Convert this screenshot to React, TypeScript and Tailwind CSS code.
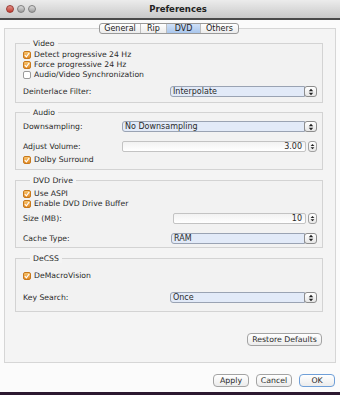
import type { ReactNode } from "react";

const FONT = "font-['DejaVu_Sans',sans-serif]";

function Arrows({ size = 7 }: { size?: number }) {
  return (
    <svg width={size} height={size + 2} viewBox="0 0 8 10">
      <path d="M4 0.8 L7 4 L1 4 Z" fill="#222" />
      <path d="M4 9.2 L7 6 L1 6 Z" fill="#222" />
    </svg>
  );
}

function Check({ checked, label }: { checked?: boolean; label: string }) {
  return (
    <div className="h-[10px] flex items-center gap-[3px]">
      {checked ? (
        <span className="w-[8px] h-[8px] rounded-[2px] border border-[#c7781c] bg-gradient-to-b from-[#f7c46c] to-[#e38b22] flex items-center justify-center">
          <svg width="6" height="6" viewBox="0 0 6 6">
            <path d="M0.8 3.2 L2.4 4.8 L5.2 1" stroke="#fff" strokeWidth="1.2" fill="none" />
          </svg>
        </span>
      ) : (
        <span className="w-[8px] h-[8px] rounded-[2px] border border-[#9a9a9a] bg-white" />
      )}
      <span className="text-[7.7px] leading-[10px] text-[#2a2a2a]">{label}</span>
    </div>
  );
}

function Select({ value }: { value: string }) {
  return (
    <div className="flex-1 h-[11px] flex">
      <div className="flex-1 rounded-l-[3px] border border-[#9aa3b3] bg-[#e2eaf8] text-[8px] leading-[9px] pl-[2px] text-[#2a2a2a]">
        {value}
      </div>
      <div className="w-[13px] rounded-[3px] border border-[#8d8d8d] bg-gradient-to-b from-white to-[#e6e6e6] flex items-center justify-center -ml-[1px]">
        <Arrows size={6} />
      </div>
    </div>
  );
}

function NumberField({ value }: { value: string }) {
  return (
    <div className="flex-1 h-[11px] flex gap-[2px]">
      <div className="flex-1 rounded-[2px] border border-[#c3c3c3] bg-gradient-to-b from-[#f2f2f2] to-white text-[8px] leading-[9px] text-right pr-[3px] text-[#2a2a2a]">
        {value}
      </div>
      <div className="w-[9px] rounded-[3px] border border-[#a0a0a0] bg-gradient-to-b from-white to-[#e8e8e8] flex items-center justify-center">
        <Arrows size={5} />
      </div>
    </div>
  );
}

function Row({ label, labelW, children, className = "" }: { label: string; labelW: string; children: ReactNode; className?: string }) {
  return (
    <div className={`flex items-center ${className}`}>
      <span className={`${labelW} text-[7.7px] text-[#2a2a2a] shrink-0`}>{label}</span>
      {children}
    </div>
  );
}

function Group({ title, h, className = "", children }: { title: string; h: string; className?: string; children: ReactNode }) {
  return (
    <div className={`relative ${h} border border-[#d3d3d3] bg-[#f2f2f2] pl-[7px] pr-[5px] ${className}`}>
      <span className="absolute -top-[5px] left-[14px] px-[3px] bg-[#f4f4f4] text-[7.7px] leading-[9px] text-[#2a2a2a]">
        {title}
      </span>
      {children}
    </div>
  );
}

function Button({ label, w, primary }: { label: string; w: string; primary?: boolean }) {
  return (
    <div
      className={`${w} h-[13px] rounded-[4px] border ${
        primary ? "border-[#6f9fd8]" : "border-[#a3a3a3]"
      } bg-gradient-to-b from-white to-[#ececec] text-[7.8px] leading-[11px] text-center text-[#2a2a2a]`}
    >
      {label}
    </div>
  );
}

export default function App() {
  return (
    <div className={`w-[340px] h-[395px] bg-[#2c1830] ${FONT}`}>
      <div className="h-[392px] bg-[#fbfbfb] flex flex-col">
        {/* title bar */}
        <div className="relative h-[20px] shrink-0 bg-gradient-to-b from-[#ececec] to-[#c9c9c9] border-b-[2px] border-[#4a4a4a] flex items-center justify-center">
          <div className="absolute left-[6px] top-[5px] flex gap-[3px]">
            <span className="w-[8px] h-[8px] rounded-full bg-gradient-to-b from-[#e0908a] to-[#c2382e] border border-[#9a3a32]" />
            <span className="w-[8px] h-[8px] rounded-full bg-gradient-to-b from-[#dcdcdc] to-[#9d9d9d] border border-[#808080]" />
            <span className="w-[8px] h-[8px] rounded-full bg-gradient-to-b from-[#dcdcdc] to-[#9d9d9d] border border-[#808080]" />
          </div>
          <span className="text-[8.5px] font-bold text-[#222] ml-[16px]">Preferences</span>
        </div>

        {/* tabs */}
        <div className="relative z-10 mt-[3px] h-[11px] flex justify-center">
          <div className="flex h-[11px] rounded-[3px] border border-[#999] bg-gradient-to-b from-white to-[#ececec] text-[8px] leading-[9px] text-[#222] ml-[-2px]">
            <span className="w-[41px] text-center border-r border-[#bdbdbd]">General</span>
            <span className="w-[26px] text-center border-r border-[#bdbdbd]">Rip</span>
            <span className="w-[34px] text-center bg-gradient-to-b from-[#cfe0f7] to-[#a9c6ec] border-r border-[#bdbdbd]">DVD</span>
            <span className="w-[37px] text-center">Others</span>
          </div>
        </div>

        {/* panel */}
        <div className="mx-[4px] -mt-[6px] h-[335px] border border-[#d6d6d6] bg-[#f4f4f4] pt-[14px] pl-[10px] pr-[12px] flex flex-col">
          <Group title="Video" h="h-[60px]" className="pt-[6px]">
            <Check checked label="Detect progressive 24 Hz" />
            <Check checked label="Force progressive 24 Hz" />
            <Check label="Audio/Video Synchronization" />
            <Row label="Deinterlace Filter:" labelW="w-[147px]" className="mt-[6px]">
              <Select value="Interpolate" />
            </Row>
          </Group>

          <Group title="Audio" h="h-[58px]" className="mt-[9px] pt-[8px]">
            <Row label="Downsampling:" labelW="w-[99px]">
              <Select value="No Downsampling" />
            </Row>
            <Row label="Adjust Volume:" labelW="w-[99px]" className="mt-[8px]">
              <NumberField value="3.00" />
            </Row>
            <div className="mt-[3px]">
              <Check checked label="Dolby Surround" />
            </div>
          </Group>

          <Group title="DVD Drive" h="h-[68px]" className="mt-[10px] pt-[8px]">
            <Check checked label="Use ASPI" />
            <Check checked label="Enable DVD Drive Buffer" />
            <Row label="Size (MB):" labelW="w-[150px]" className="mt-[4px]">
              <NumberField value="10" />
            </Row>
            <Row label="Cache Type:" labelW="w-[148px]" className="mt-[8px]">
              <Select value="RAM" />
            </Row>
          </Group>

          <Group title="DeCSS" h="h-[54px]" className="mt-[10px] pt-[12px]">
            <Check checked label="DeMacroVision" />
            <Row label="Key Search:" labelW="w-[147px]" className="mt-[11px]">
              <Select value="Once" />
            </Row>
          </Group>

          <div className="mt-[21px] flex justify-end pr-[1px]">
            <Button label="Restore Defaults" w="w-[75px]" />
          </div>
        </div>

        {/* bottom buttons */}
        <div className="mt-[11px] flex justify-end gap-[7px] pr-[5px]">
          <Button label="Apply" w="w-[36px]" />
          <Button label="Cancel" w="w-[36px]" />
          <Button label="OK" w="w-[36px]" primary />
        </div>
      </div>
    </div>
  );
}
